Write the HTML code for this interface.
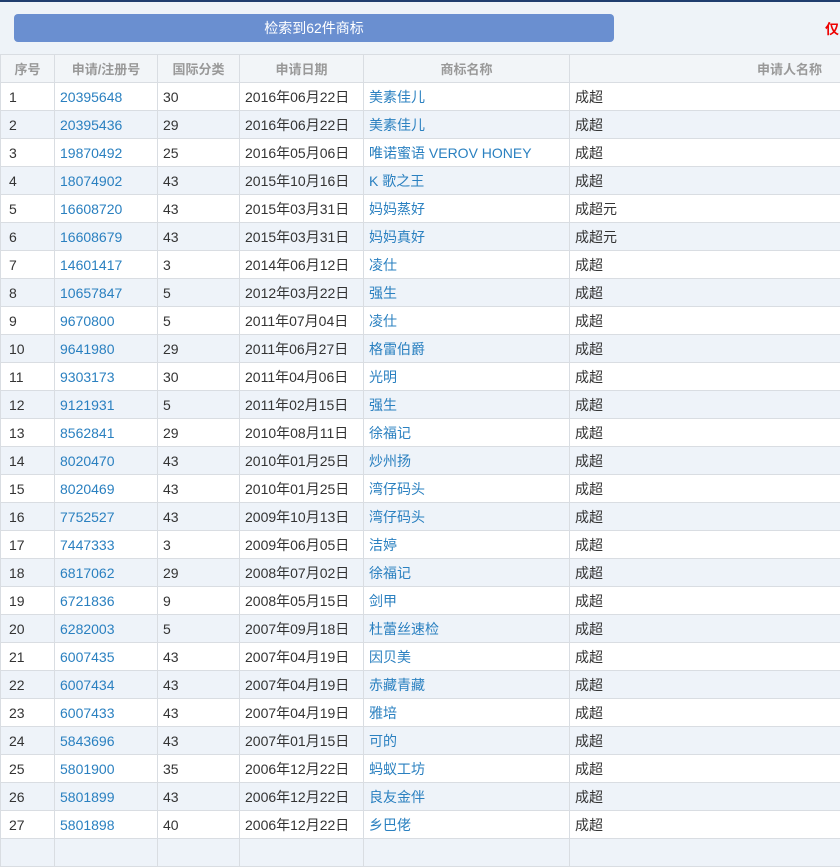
<!DOCTYPE html><html><head><meta charset="utf-8"><style>
body{margin:0;width:840px;height:842px;overflow:hidden;background:#eef3f8;font-family:"Liberation Sans","Noto Sans CJK SC",sans-serif;position:relative}
.top{position:absolute;left:0;top:0;width:840px;height:2px;background:#1f3d6e}
.btn{position:absolute;left:14px;top:14px;width:600px;height:28px;background:#6a8fd0;border-radius:4px;color:#fff;font-size:14px;line-height:28px;text-align:center}
.red{position:absolute;left:825px;top:19px;color:#e00;font-size:14px;font-weight:bold}
table{position:absolute;left:0;top:54px;border-collapse:collapse;table-layout:fixed;width:1000px}
td,th{border:1px solid #d9dde2;height:27px;padding:0 0 0 5px;font-size:14px;color:#333;white-space:nowrap;overflow:hidden;text-align:left;font-weight:normal}
td:first-child{padding-left:8px}
th{color:#999;font-size:13px;font-weight:bold;text-align:center;padding:0;background:#f2f5f8}
tr:nth-child(odd) td{background:#fff}
tr:nth-child(even) td{background:#eef3f9}
td.l{color:#2a80c0}
</style></head><body>
<div class="top"></div>
<div class="btn">检索到62件商标</div>
<div class="red">仅</div>
<table>
<colgroup><col style="width:54px"><col style="width:103px"><col style="width:82px"><col style="width:124px"><col style="width:206px"><col style="width:431px"></colgroup>
<thead><tr><th>序号</th><th>申请/注册号</th><th>国际分类</th><th>申请日期</th><th>商标名称</th><th style="text-align:right;padding-right:178px">申请人名称</th></tr></thead>
<tbody>
<tr><td>1</td><td class="l">20395648</td><td>30</td><td>2016年06月22日</td><td class="l">美素佳儿</td><td>成超</td></tr>
<tr><td>2</td><td class="l">20395436</td><td>29</td><td>2016年06月22日</td><td class="l">美素佳儿</td><td>成超</td></tr>
<tr><td>3</td><td class="l">19870492</td><td>25</td><td>2016年05月06日</td><td class="l">唯诺蜜语 VEROV HONEY</td><td>成超</td></tr>
<tr><td>4</td><td class="l">18074902</td><td>43</td><td>2015年10月16日</td><td class="l">K 歌之王</td><td>成超</td></tr>
<tr><td>5</td><td class="l">16608720</td><td>43</td><td>2015年03月31日</td><td class="l">妈妈蒸好</td><td>成超元</td></tr>
<tr><td>6</td><td class="l">16608679</td><td>43</td><td>2015年03月31日</td><td class="l">妈妈真好</td><td>成超元</td></tr>
<tr><td>7</td><td class="l">14601417</td><td>3</td><td>2014年06月12日</td><td class="l">凌仕</td><td>成超</td></tr>
<tr><td>8</td><td class="l">10657847</td><td>5</td><td>2012年03月22日</td><td class="l">强生</td><td>成超</td></tr>
<tr><td>9</td><td class="l">9670800</td><td>5</td><td>2011年07月04日</td><td class="l">凌仕</td><td>成超</td></tr>
<tr><td>10</td><td class="l">9641980</td><td>29</td><td>2011年06月27日</td><td class="l">格雷伯爵</td><td>成超</td></tr>
<tr><td>11</td><td class="l">9303173</td><td>30</td><td>2011年04月06日</td><td class="l">光明</td><td>成超</td></tr>
<tr><td>12</td><td class="l">9121931</td><td>5</td><td>2011年02月15日</td><td class="l">强生</td><td>成超</td></tr>
<tr><td>13</td><td class="l">8562841</td><td>29</td><td>2010年08月11日</td><td class="l">徐福记</td><td>成超</td></tr>
<tr><td>14</td><td class="l">8020470</td><td>43</td><td>2010年01月25日</td><td class="l">炒州扬</td><td>成超</td></tr>
<tr><td>15</td><td class="l">8020469</td><td>43</td><td>2010年01月25日</td><td class="l">湾仔码头</td><td>成超</td></tr>
<tr><td>16</td><td class="l">7752527</td><td>43</td><td>2009年10月13日</td><td class="l">湾仔码头</td><td>成超</td></tr>
<tr><td>17</td><td class="l">7447333</td><td>3</td><td>2009年06月05日</td><td class="l">洁婷</td><td>成超</td></tr>
<tr><td>18</td><td class="l">6817062</td><td>29</td><td>2008年07月02日</td><td class="l">徐福记</td><td>成超</td></tr>
<tr><td>19</td><td class="l">6721836</td><td>9</td><td>2008年05月15日</td><td class="l">剑甲</td><td>成超</td></tr>
<tr><td>20</td><td class="l">6282003</td><td>5</td><td>2007年09月18日</td><td class="l">杜蕾丝速检</td><td>成超</td></tr>
<tr><td>21</td><td class="l">6007435</td><td>43</td><td>2007年04月19日</td><td class="l">因贝美</td><td>成超</td></tr>
<tr><td>22</td><td class="l">6007434</td><td>43</td><td>2007年04月19日</td><td class="l">赤藏青藏</td><td>成超</td></tr>
<tr><td>23</td><td class="l">6007433</td><td>43</td><td>2007年04月19日</td><td class="l">雅培</td><td>成超</td></tr>
<tr><td>24</td><td class="l">5843696</td><td>43</td><td>2007年01月15日</td><td class="l">可的</td><td>成超</td></tr>
<tr><td>25</td><td class="l">5801900</td><td>35</td><td>2006年12月22日</td><td class="l">蚂蚁工坊</td><td>成超</td></tr>
<tr><td>26</td><td class="l">5801899</td><td>43</td><td>2006年12月22日</td><td class="l">良友金伴</td><td>成超</td></tr>
<tr><td>27</td><td class="l">5801898</td><td>40</td><td>2006年12月22日</td><td class="l">乡巴佬</td><td>成超</td></tr>
<tr><td>&nbsp;</td><td></td><td></td><td></td><td></td><td></td></tr>
</tbody></table>
</body></html>
